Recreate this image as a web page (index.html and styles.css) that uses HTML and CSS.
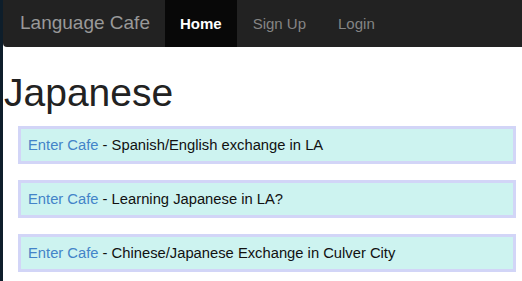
FILE: index.html
```html
<!DOCTYPE html>
<html>
<head>
<meta charset="utf-8">
<link rel="stylesheet" href="styles.css">
</head>
<body>
<div class="page">
  <div class="edge"></div>
  <div class="main">
    <nav class="navbar">
      <a class="brand" href="#">Language Cafe</a>
      <a class="nav-link active" href="#">Home</a>
      <a class="nav-link" href="#">Sign Up</a>
      <a class="nav-link" href="#">Login</a>
    </nav>
    <h1 class="title">Japanese</h1>
    <ul class="cafes">
      <li class="cafe"><a href="#">Enter Cafe</a> - Spanish/English exchange in LA</li>
      <li class="cafe"><a href="#">Enter Cafe</a> - Learning Japanese in LA?</li>
      <li class="cafe"><a href="#">Enter Cafe</a> - Chinese/Japanese Exchange in Culver City</li>
    </ul>
  </div>
</div>
</body>
</html>
```
FILE: styles.css
```css
html, body {
  margin: 0;
  padding: 0;
  background: #fff;
  font-family: "Liberation Sans", Arial, sans-serif;
}
.page {
  display: flex;
  height: 281px;
}
.edge {
  width: 3px;
  background: #0e1e2b;
  flex: none;
}
.main {
  flex: 1;
  min-width: 0;
}
.navbar {
  display: flex;
  align-items: stretch;
  height: 47px;
  background: #222222;
  border-bottom-left-radius: 4px;
}
.brand {
  color: #999;
  font-size: 19px;
  text-decoration: none;
  padding: 0 15px 1px 17px;
  display: flex;
  align-items: center;
}
.nav-link {
  color: #858585;
  font-size: 15px;
  text-decoration: none;
  display: flex;
  align-items: center;
  padding: 0 16px 1px;
}
.nav-link.active {
  background: #080808;
  color: #fff;
  font-weight: bold;
  padding: 0 15px 1px;
}
.title {
  margin: 24px 0 0 1px;
  font-size: 39px;
  font-weight: normal;
  line-height: 44px;
  color: #222;
}
.cafes {
  list-style: none;
  margin: 11px 0 0 15px;
  padding: 0;
  width: 498px;
}
.cafe {
  background: #cdf3f0;
  border: 3px solid #d2d5f7;
  height: 32px;
  line-height: 32px;
  padding: 0 7px;
  font-size: 14.75px;
  color: #111;
  margin-bottom: 16px;
}
.cafe a {
  color: #4384c8;
  text-decoration: none;
}
```
